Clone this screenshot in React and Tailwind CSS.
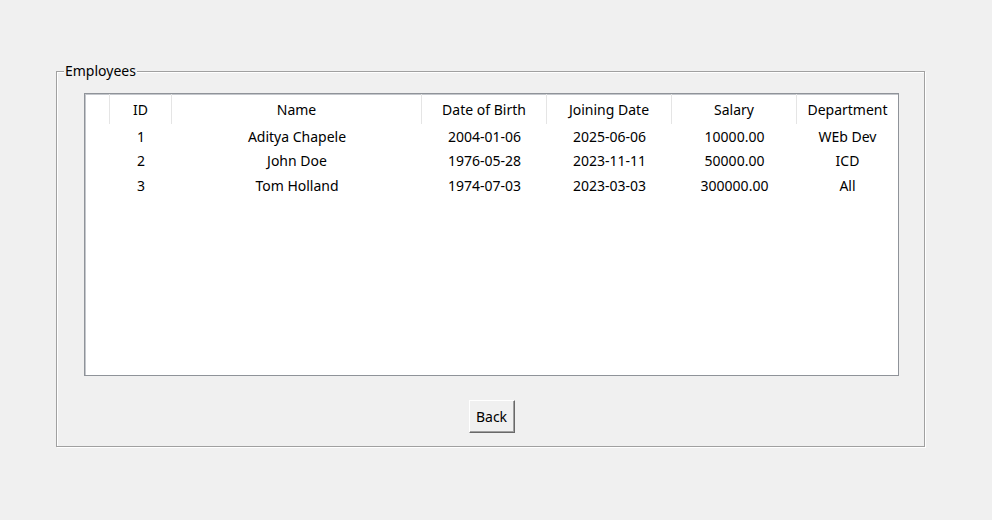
import React from "react";

const columns = [
  { key: "tree", label: "", width: 25 },
  { key: "id", label: "ID", width: 62 },
  { key: "name", label: "Name", width: 250 },
  { key: "dob", label: "Date of Birth", width: 125 },
  { key: "join", label: "Joining Date", width: 125 },
  { key: "salary", label: "Salary", width: 125 },
  { key: "dept", label: "Department", width: 101 },
];

const employees = [
  { id: 1, name: "Aditya Chapele", dob: "2004-01-06", join: "2025-06-06", salary: "10000.00", dept: "WEb Dev" },
  { id: 2, name: "John Doe", dob: "1976-05-28", join: "2023-11-11", salary: "50000.00", dept: "ICD" },
  { id: 3, name: "Tom Holland", dob: "1974-07-03", join: "2023-03-03", salary: "300000.00", dept: "All" },
];

const EmployeeTable = () => {
  return (
    <div className="ml-[27px] mt-[15px] w-[815px] h-[283px] bg-white border border-[#8f9399] shadow-[inset_1px_1px_0_#c4c7cc]">
      <div className="flex h-[30px]">
        {columns.map((col, i) => (
          <div
            key={col.key}
            style={{ width: col.width }}
            className={`shrink-0 flex items-center justify-center ${
              i < columns.length - 1 ? "border-r border-[#e5e5e5]" : ""
            }`}
          >
            {col.label}
          </div>
        ))}
      </div>
      {employees.map((emp) => (
        <div key={emp.id} className="flex h-[24.5px] items-center">
          {columns.map((col) => (
            <div
              key={col.key}
              style={{ width: col.width }}
              className="shrink-0 text-center whitespace-nowrap"
            >
              {col.key === "tree" ? "" : emp[col.key]}
            </div>
          ))}
        </div>
      ))}
    </div>
  );
};

export default function App() {
  return (
    <div
      className="w-[992px] h-[520px] bg-[#f0f0f0] text-black text-[14px] pt-[64px] pl-[56px]"
      style={{ fontFamily: '"Noto Sans", sans-serif' }}
    >
      <fieldset className="w-[869px] h-[383px] border border-[#a0a0a0] shadow-[1px_1px_0_#fff,inset_1px_1px_0_#fff]">
        <legend className="ml-[7px] px-px bg-[#f0f0f0] leading-[14px]">Employees</legend>
        <EmployeeTable />
        <div className="flex justify-center mt-[24px]">
          <button className="w-[46px] h-[33px] bg-[#f0f0f0] border border-t-white border-l-white border-b-[#696969] border-r-[#696969] shadow-[inset_-1px_-1px_0_#a0a0a0] ml-[2px]">
            Back
          </button>
        </div>
      </fieldset>
    </div>
  );
}
